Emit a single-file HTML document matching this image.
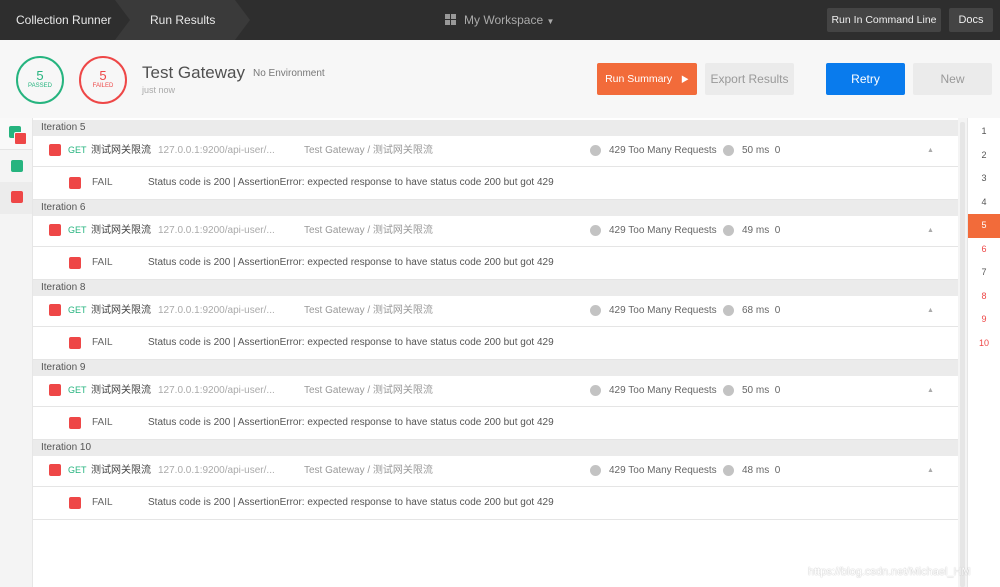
<!DOCTYPE html>
<html><head><meta charset="utf-8"><style>
*{margin:0;padding:0;box-sizing:border-box}
body{width:1000px;height:587px;overflow:hidden;background:#fff;font-family:"Liberation Sans","Noto Sans CJK SC",sans-serif;position:relative;color:#505050}
.a{position:absolute}
.top{left:0;top:0;width:1000px;height:40px;background:#2e2e2e}
.tb{color:#e8e8e8;font-size:12px;top:0;line-height:40px}
.btn{border-radius:2px;font-size:12px;text-align:center}
.hdr{left:0;top:40px;width:1000px;height:78px;background:#f7f7f7}
.circ{width:48px;height:48px;border-radius:50%;border:2px solid;text-align:center}
.sq{width:12px;height:12px;border-radius:2px;background:#ee4747}
.it{left:33px;width:925px;height:16px;background:#ebebeb;font-size:10px;color:#555;padding-left:8px;line-height:16px}
.row{left:33px;width:925px;border-bottom:1px solid #e5e5e5;background:#fff;font-size:10px}
.row span{position:absolute;top:0;white-space:nowrap}
.dot{width:11px;height:11px;border-radius:50%;background:#c3c3c3}
.pg{left:968px;width:32px;height:23.5px;text-align:center;font-size:9px;line-height:23.5px;color:#555}
</style></head><body>
<div class="a top"></div>
<div class="a" style="left:115px;top:0;width:135px;height:40px;background:#3a3a3a;clip-path:polygon(0 0,120px 0,135px 20px,120px 40px,0 40px,15px 20px)"></div>
<div class="a tb" style="left:16px">Collection Runner</div>
<div class="a tb" style="left:150px">Run Results</div>
<div class="a" style="left:445px;top:14px;width:11px;height:11px;display:grid;grid-template-columns:5px 5px;gap:1px"><i style="background:#999"></i><i style="background:#999"></i><i style="background:#999"></i><i style="background:#999"></i></div>
<div class="a tb" style="left:464px;color:#aaa">My Workspace <span style="font-size:8px">▼</span></div>
<div class="a btn" style="left:827px;top:8px;width:114px;height:24px;background:#444;color:#eee;line-height:24px;font-size:10.5px">Run In Command Line</div>
<div class="a btn" style="left:949px;top:8px;width:44px;height:24px;background:#444;color:#eee;line-height:24px;font-size:11px">Docs</div>
<div class="a hdr"></div>
<div class="a circ" style="left:16px;top:56px;border-color:#26b47f;color:#26b47f"><div style="font-size:13px;margin-top:10px">5</div><div style="font-size:6px">PASSED</div></div>
<div class="a circ" style="left:79px;top:56px;border-color:#ee4747;color:#ee4747"><div style="font-size:13px;margin-top:10px">5</div><div style="font-size:6px">FAILED</div></div>
<div class="a" style="left:142px;top:63px;font-size:17px;color:#505050">Test Gateway</div>
<div class="a" style="left:253px;top:68px;font-size:10px;color:#777">No Environment</div>
<div class="a" style="left:142px;top:85px;font-size:9px;color:#aaa">just now</div>
<div class="a btn" style="left:597px;top:63px;width:100px;height:32px;background:#f26b3a;color:#fff;line-height:32px;font-size:10.5px">Run Summary &nbsp; <span style="font-size:8px">▶</span></div>
<div class="a btn" style="left:705px;top:63px;width:89px;height:32px;background:#ebebeb;color:#999;line-height:32px">Export Results</div>
<div class="a btn" style="left:826px;top:63px;width:79px;height:32px;background:#097bed;color:#fff;line-height:32px">Retry</div>
<div class="a btn" style="left:913px;top:63px;width:79px;height:32px;background:#ebebeb;color:#999;line-height:32px">New</div>
<div class="a" style="left:0;top:118px;width:33px;height:469px;background:#f4f4f4;border-right:1px solid #e6e6e6"></div>
<div class="a" style="left:0;top:118px;width:32px;height:32px;background:#f9f9f9;border-bottom:1px solid #e5e5e5"></div>
<div class="a" style="left:0;top:182px;width:32px;height:32px;background:#ececec"></div>
<div class="a sq" style="left:9px;top:126px;background:#26b47f"></div>
<div class="a sq" style="left:14px;top:132px;border:1px solid #f9f9f9;width:13px;height:13px"></div>
<div class="a sq" style="left:11px;top:160px;background:#26b47f"></div>
<div class="a sq" style="left:11px;top:191px"></div>
<div class="a" style="left:958px;top:118px;width:10px;height:469px;background:#f4f4f4"></div>
<div class="a" style="left:960px;top:122px;width:5px;height:465px;background:#e6e6e6;border-radius:2px"></div>
<div class="a" style="left:967px;top:118px;width:33px;height:469px;background:#fff;border-left:1px solid #e6e6e6"></div>
<div class="a pg" style="top:120px">1</div>
<div class="a pg" style="top:143.5px">2</div>
<div class="a pg" style="top:167px">3</div>
<div class="a pg" style="top:190.5px">4</div>
<div class="a pg" style="top:214px;background:#f26b3a;color:#fff">5</div>
<div class="a pg" style="top:237.5px;color:#ee4747">6</div>
<div class="a pg" style="top:261px">7</div>
<div class="a pg" style="top:284.5px;color:#ee4747">8</div>
<div class="a pg" style="top:308px;color:#ee4747">9</div>
<div class="a pg" style="top:331.5px;color:#ee4747">10</div>
<div id="c"></div>
<script>
var its=[["5","50"],["6","49"],["8","68"],["9","50"],["10","48"]],h="";
its.forEach(function(v,i){var y=120+i*80;
h+='<div class="a it" style="top:'+y+'px">Iteration '+v[0]+'</div>';
h+='<div class="a row" style="top:'+(y+16)+'px;height:31px;line-height:29px"><div class="a sq" style="left:16px;top:8px"></div><span style="left:35px;color:#26b47f;font-size:9px">GET</span><span style="left:58px;color:#444">测试网关限流</span><span style="left:125px;color:#aaa">127.0.0.1:9200/api-user/...</span><span style="left:271px;color:#999">Test Gateway / 测试网关限流</span><div class="a dot" style="left:557px;top:9px"></div><span style="left:576px;color:#666">429 Too Many Requests</span><div class="a dot" style="left:690px;top:9px"></div><span style="left:709px;color:#666">'+v[1]+' ms &nbsp;0</span><span style="left:894px;color:#aaa;font-size:7px">▲</span></div>';
h+='<div class="a row" style="top:'+(y+47)+'px;height:33px;line-height:32px"><div class="a sq" style="left:36px;top:10px"></div><span style="left:59px;color:#666">FAIL</span><span style="left:115px;color:#555">Status code is 200 | AssertionError: expected response to have status code 200 but got 429</span></div>';
});
document.getElementById("c").innerHTML=h;
</script>
<div class="a" style="left:808px;top:566px;font-size:11px;color:#fff;text-shadow:0 0 1px #999">https://blog.csdn.net/Michael_HM</div>
</body></html>
